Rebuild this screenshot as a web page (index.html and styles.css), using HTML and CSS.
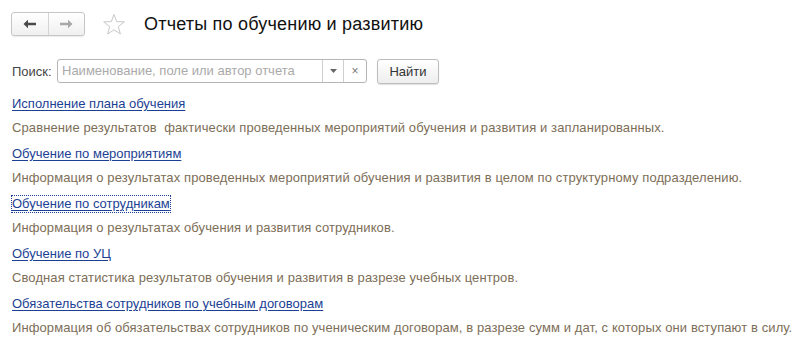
FILE: index.html
```html
<!DOCTYPE html>
<html lang="ru">
<head>
<meta charset="utf-8">
<link rel="stylesheet" href="styles.css">
</head>
<body>
<div class="page">
  <header class="head">
    <div class="nav">
      <button class="nav-btn back" aria-label="Назад">
        <svg width="14" height="10" viewBox="0 0 14 10"><path d="M0.5 5 L5 0.8 V3.8 H13 V6.2 H5 V9.2 Z" fill="#4a4a4a"/></svg>
      </button>
      <button class="nav-btn fwd" aria-label="Вперед">
        <svg width="14" height="10" viewBox="0 0 14 10"><path d="M13.5 5 L9 0.8 V3.8 H1 V6.2 H9 V9.2 Z" fill="#a8a8a8"/></svg>
      </button>
    </div>
    <svg class="star" width="24" height="24" viewBox="0 0 24 24"><path d="M12 1.5 L14.7 8.6 L22.3 8.9 L16.3 13.6 L18.4 21 L12 16.8 L5.6 21 L7.7 13.6 L1.7 8.9 L9.3 8.6 Z" fill="none" stroke="#c8c8c8" stroke-width="1"/></svg>
    <h1 class="title">Отчеты по обучению и развитию</h1>
  </header>
  <div class="search">
    <span class="search-label">Поиск:</span>
    <div class="field">
      <span class="placeholder">Наименование, поле или автор отчета</span>
      <span class="fbtn drop"><svg width="7" height="4" viewBox="0 0 7 4"><path d="M0 0 H7 L3.5 4 Z" fill="#666"/></svg></span>
      <span class="fbtn clear">×</span>
    </div>
    <button class="find">Найти</button>
  </div>
  <ul class="reports">
    <li><a class="link">Исполнение плана обучения</a><p class="desc">Сравнение результатов&nbsp; фактически проведенных мероприятий обучения и развития и запланированных.</p></li>
    <li><a class="link">Обучение по мероприятиям</a><p class="desc">Информация о результатах проведенных мероприятий обучения и развития в целом по структурному подразделению.</p></li>
    <li><a class="link focused">Обучение по сотрудникам</a><p class="desc">Информация о результатах обучения и развития сотрудников.</p></li>
    <li><a class="link">Обучение по УЦ</a><p class="desc">Сводная статистика результатов обучения и развития в разрезе учебных центров.</p></li>
    <li><a class="link">Обязательства сотрудников по учебным договорам</a><p class="desc">Информация об обязательствах сотрудников по ученическим договорам, в разрезе сумм и дат, с которых они вступают в силу.</p></li>
  </ul>
</div>
</body>
</html>
```

FILE: styles.css
```css
* { box-sizing: border-box; }
html, body { margin: 0; padding: 0; background: #fff; }
body { font-family: Arial, "Liberation Sans", sans-serif; font-size: 13px; color: #333; }
.page { padding: 12px 0 0 11px; }
.head { display: flex; align-items: center; height: 24px; }
.nav { display: flex; width: 74px; height: 24px; border: 1px solid #c6c6c6; border-radius: 3px; background: linear-gradient(#ffffff, #f0f0f0); box-shadow: 0 1px 1px rgba(0,0,0,0.08); }
.nav-btn { flex: 1; border: 0; background: transparent; padding: 0; display: flex; align-items: center; justify-content: center; }
.nav-btn.back { border-right: 1px solid #d4d4d4; }
.star { margin-left: 17px; margin-top: 2px; }
.title { margin: 0 0 0 18px; font-size: 18px; font-weight: normal; color: #111; line-height: 24px; letter-spacing: 0.2px; }
.search { display: flex; align-items: center; margin-top: 23px; height: 24px; }
.search-label { color: #444; margin-left: 1px; width: 45px; }
.field { display: flex; width: 310px; height: 24px; border: 1px solid #b5b5b5; border-radius: 3px; background: #fff; }
.placeholder { flex: 1; color: #aaa; padding-left: 4px; line-height: 22px; white-space: nowrap; overflow: hidden; }
.fbtn { width: 21px; display: flex; align-items: center; justify-content: center; border-left: 1px solid #cfcfcf; color: #777; font-size: 12px; }
.fbtn.clear { width: 23px; }
.find { margin-left: 10px; width: 62px; height: 25px; border: 1px solid #bdbdbd; border-radius: 3px; background: linear-gradient(#ffffff, #eeeeee); box-shadow: 0 1px 1px rgba(0,0,0,0.12); font-family: inherit; font-size: 13px; color: #333; padding: 0; }
.reports { list-style: none; margin: 10px 0 0 0; padding: 0 0 0 1px; }
.reports li { height: 50px; }
.link { display: inline-block; color: #1c3f94; text-decoration: underline; text-underline-offset: 2px; line-height: 16px; margin-top: 3px; }
.link.focused { outline: 1px dotted #1c3f94; }
.desc { margin: 8px 0 0 0; color: #7d6e57; line-height: 16px; white-space: nowrap; letter-spacing: 0.1px; }
```
